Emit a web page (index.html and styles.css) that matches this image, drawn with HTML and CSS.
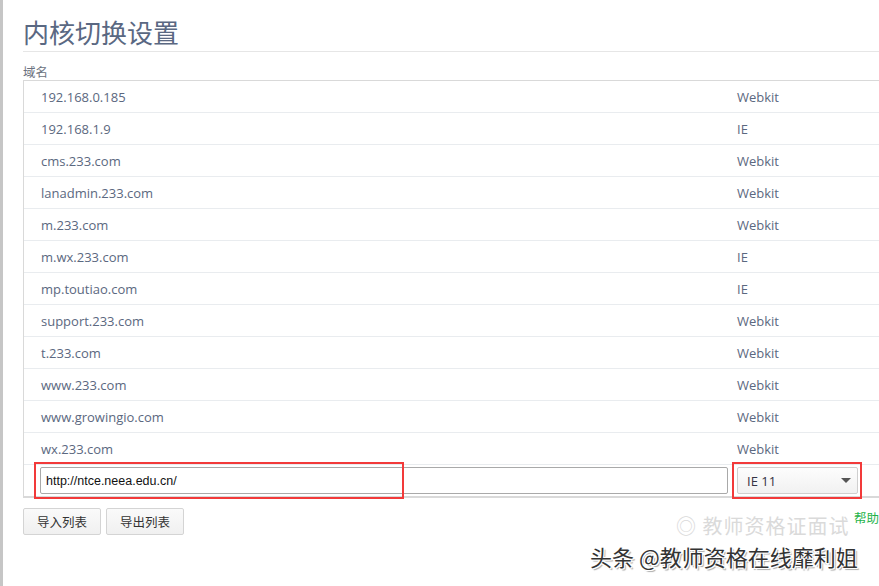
FILE: index.html
```html
<!DOCTYPE html>
<html lang="zh">
<head>
<meta charset="utf-8">
<link rel="stylesheet" href="styles.css">
</head>
<body>
<div class="page">
  <div class="edge"></div>
  <main class="main">
    <h1 class="title">内核切换设置</h1>
    <div class="label">域名</div>
    <div class="table">
      <div class="row"><span class="host">192.168.0.185</span><span class="kernel">Webkit</span></div>
      <div class="row"><span class="host">192.168.1.9</span><span class="kernel">IE</span></div>
      <div class="row"><span class="host">cms.233.com</span><span class="kernel">Webkit</span></div>
      <div class="row"><span class="host">lanadmin.233.com</span><span class="kernel">Webkit</span></div>
      <div class="row"><span class="host">m.233.com</span><span class="kernel">Webkit</span></div>
      <div class="row"><span class="host">m.wx.233.com</span><span class="kernel">IE</span></div>
      <div class="row"><span class="host">mp.toutiao.com</span><span class="kernel">IE</span></div>
      <div class="row"><span class="host">support.233.com</span><span class="kernel">Webkit</span></div>
      <div class="row"><span class="host">t.233.com</span><span class="kernel">Webkit</span></div>
      <div class="row"><span class="host">www.233.com</span><span class="kernel">Webkit</span></div>
      <div class="row"><span class="host">www.growingio.com</span><span class="kernel">Webkit</span></div>
      <div class="row"><span class="host">wx.233.com</span><span class="kernel">Webkit</span></div>
      <div class="row input-row">
        <div class="field-wrap">
          <input class="url" type="text" value="http://ntce.neea.edu.cn/">
          <div class="mark mark-url"></div>
        </div>
        <div class="select-wrap">
          <div class="select"><span>IE 11</span><span class="caret"></span></div>
          <div class="mark mark-select"></div>
        </div>
      </div>
    </div>
    <div class="actions">
      <button class="btn">导入列表</button>
      <button class="btn">导出列表</button>
      <a class="help">帮助</a>
    </div>
  </main>
  <div class="wm-faint">◎ 教师资格证面试</div>
  <div class="wm">头条 @教师资格在线靡利姐</div>
</div>
</body>
</html>
```

FILE: styles.css
```css
html, body {
  margin: 0;
  padding: 0;
  background: #fff;
  overflow: hidden;
}
body {
  width: 879px;
  height: 586px;
  font-family: "Open Sans", "Noto Sans CJK SC", sans-serif;
}
.page {
  position: relative;
  display: flex;
  height: 586px;
  overflow: hidden;
}
.edge {
  width: 3px;
  background: #c6c6c6;
  flex: none;
}
.main {
  margin-left: 20px;
  width: 900px;
  flex: none;
}
.title {
  margin: 0;
  padding-top: 15px;
  height: 36px;
  font-weight: normal;
  font-size: 26px;
  line-height: 34px;
  color: #5a6882;
  font-family: "Noto Sans CJK SC", sans-serif;
  border-bottom: 1px solid #e6e6e6;
}
.label {
  margin-top: 12px;
  font-size: 12.5px;
  line-height: 16px;
  color: #6b7280;
  font-family: "Noto Sans CJK SC", sans-serif;
}
.table {
  border-top: 1px solid #d9d9d9;
  border-left: 1px solid #d9d9d9;
  border-bottom: 2px solid #d9d9d9;
}
.row {
  display: flex;
  align-items: center;
  height: 31px;
  border-bottom: 1px solid #e9ecef;
  font-size: 13px;
  color: #5b6880;
}
.host {
  width: 696px;
  padding-left: 17px;
}
.kernel {
  flex: none;
}
.input-row {
  height: 31px;
  border-bottom: none;
}
.field-wrap {
  position: relative;
  margin-left: 16px;
  width: 688px;
}
.url {
  display: block;
  box-sizing: border-box;
  width: 688px;
  height: 27px;
  margin: 0;
  padding: 0 5px;
  border: 1px solid #a9a9a9;
  border-radius: 2px;
  font-family: "Liberation Sans", Arial, sans-serif;
  font-size: 12.5px;
  color: #111;
  background: #fff;
}
.select-wrap {
  position: relative;
  margin-left: 9px;
}
.select {
  box-sizing: border-box;
  width: 121px;
  height: 27px;
  display: flex;
  align-items: center;
  justify-content: space-between;
  padding: 0 6px 0 9px;
  border: 1px solid #cfcfcf;
  border-radius: 2px;
  background: linear-gradient(#fdfdfd, #f1f1f1);
  font-size: 13px;
  color: #334;
}
.caret {
  width: 0;
  height: 0;
  border-left: 5px solid transparent;
  border-right: 5px solid transparent;
  border-top: 5px solid #555;
}
.mark {
  position: absolute;
  border: 2px solid #f23a3a;
  pointer-events: none;
}
.mark-url {
  left: -6px;
  top: -5px;
  width: 366px;
  height: 33px;
}
.mark-select {
  left: -5px;
  top: -5px;
  width: 126px;
  height: 33px;
}
.actions {
  display: flex;
  align-items: flex-start;
  margin-top: 10px;
  width: 856px;
}
.btn {
  box-sizing: border-box;
  width: 78px;
  height: 27px;
  margin: 0 5px 0 0;
  padding: 0;
  border: 1px solid #d4d4d4;
  border-radius: 2px;
  background: linear-gradient(#fafafa, #f0f0f0);
  font-family: "Noto Sans CJK SC", sans-serif;
  font-size: 12.5px;
  color: #333;
}
.help {
  margin-left: auto;
  margin-top: 2px;
  font-family: "Noto Sans CJK SC", sans-serif;
  font-size: 12.5px;
  line-height: 16px;
  color: #1fb34a;
}
.wm-faint {
  position: absolute;
  left: 676px;
  top: 516px;
  font-family: "Noto Sans CJK SC", sans-serif;
  font-size: 20px;
  line-height: 20px;
  color: #dadada;
  letter-spacing: 1px;
}
.wm {
  position: absolute;
  left: 590px;
  top: 542px;
  font-family: "Noto Sans CJK SC", sans-serif;
  font-size: 22px;
  line-height: 28px;
  color: #333;
  text-shadow: 1px 1px 0 #fff, -1px -1px 0 #fff, 1px -1px 0 #fff, -1px 1px 0 #fff, 2px 2px 1px #aaa;
}
```
